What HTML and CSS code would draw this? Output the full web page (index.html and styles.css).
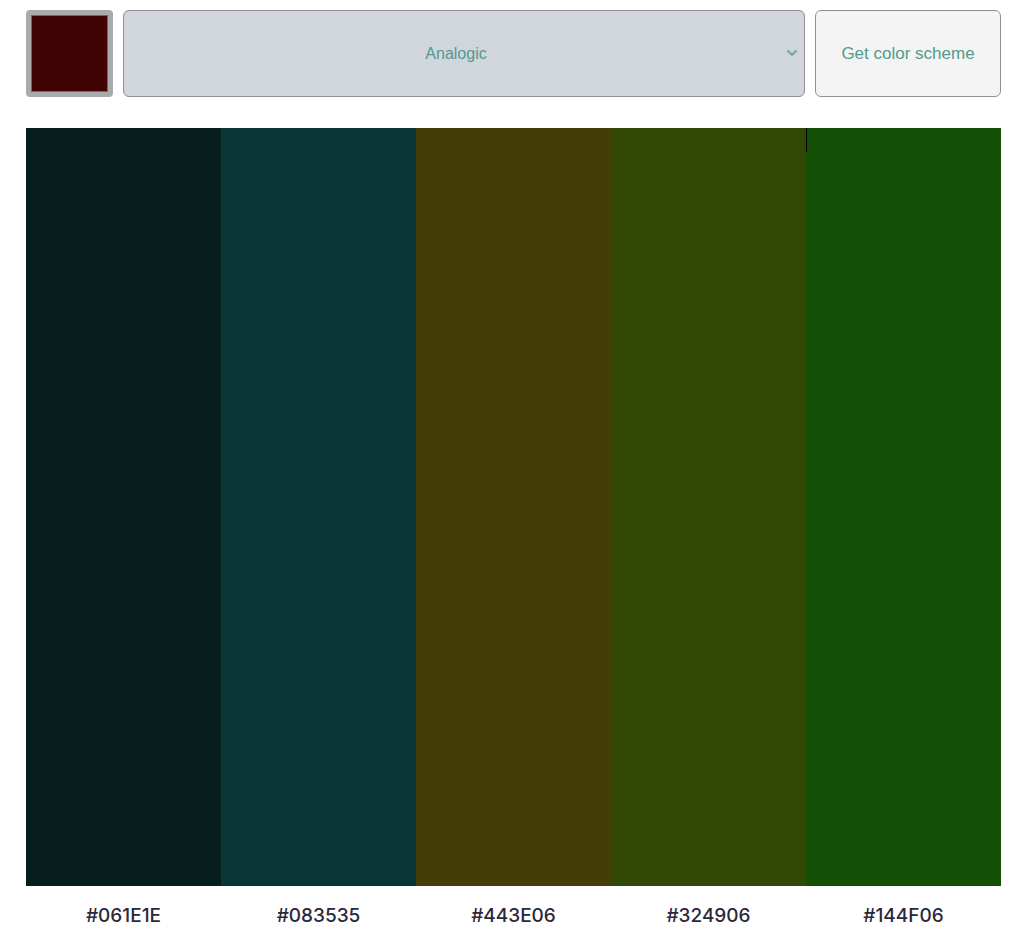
FILE: index.html
```html
<!DOCTYPE html>
<html>
<head>
<meta charset="utf-8">
<link rel="stylesheet" href="styles.css">
</head>
<body>
<main class="app">
  <header class="controls">
    <div class="color-picker"><div class="swatch"></div></div>
    <div class="select">
      <span class="select-text">Analogic</span>
      <svg class="chevron" width="12" height="8" viewBox="0 0 12 8"><path d="M1.5 1.5 L6 6 L10.5 1.5" fill="none" stroke="#6aa79d" stroke-width="1.8"/></svg>
    </div>
    <button class="get-btn">Get color scheme</button>
  </header>
  <section class="palette">
    <div class="col"><div class="bar c1"></div><p class="hex">#061E1E</p></div>
    <div class="col"><div class="bar c2"></div><p class="hex">#083535</p></div>
    <div class="col"><div class="bar c3"></div><p class="hex">#443E06</p></div>
    <div class="col"><div class="bar c4"></div><p class="hex">#324906</p></div>
    <div class="col"><div class="bar c5"><span class="caret"></span></div><p class="hex">#144F06</p></div>
  </section>
</main>
</body>
</html>
```
FILE: styles.css
```css
html, body { margin: 0; padding: 0; background: #fff; }
.app { width: 975px; margin-left: 26px; padding-top: 10px; }
.controls { display: flex; gap: 10px; height: 87px; }
.color-picker {
  width: 87px; height: 87px; box-sizing: border-box;
  background: #a8aaae; border-radius: 4px; padding: 5px;
}
.swatch { width: 100%; height: 100%; box-sizing: border-box; background: #410404; border: 1px solid #6b6b6b; }
.select {
  position: relative; flex: 1; box-sizing: border-box;
  background: #d1d5dc; border: 1px solid #8f8f8f; border-radius: 6px;
  display: flex; align-items: center; justify-content: center;
  padding-right: 16px;
}
.select-text { font-family: "Liberation Sans", Arial, sans-serif; font-size: 16px; color: #52998f; }
.chevron { position: absolute; right: 6px; top: 38px; }
.get-btn {
  width: 186px; box-sizing: border-box;
  background: #f4f4f4; border: 1px solid #8f8f8f; border-radius: 6px;
  font-family: "Liberation Sans", Arial, sans-serif; font-size: 17px; color: #52998f;
  padding: 0;
}
.palette { display: flex; margin-top: 31px; }
.col { flex: 1; }
.bar { height: 758px; position: relative; }
.c1 { background: #061e1e; }
.c2 { background: #083535; }
.c3 { background: #443e06; }
.c4 { background: #324906; }
.c5 { background: #144f06; }
.caret { position: absolute; left: 0; top: 0; width: 1px; height: 24px; background: #000; }
.hex {
  margin: 0; height: 58px; display: flex; align-items: center; justify-content: center;
  font-family: Inter, "Noto Sans", sans-serif; font-weight: 500; font-size: 19px; color: #2b283a;
}
```
